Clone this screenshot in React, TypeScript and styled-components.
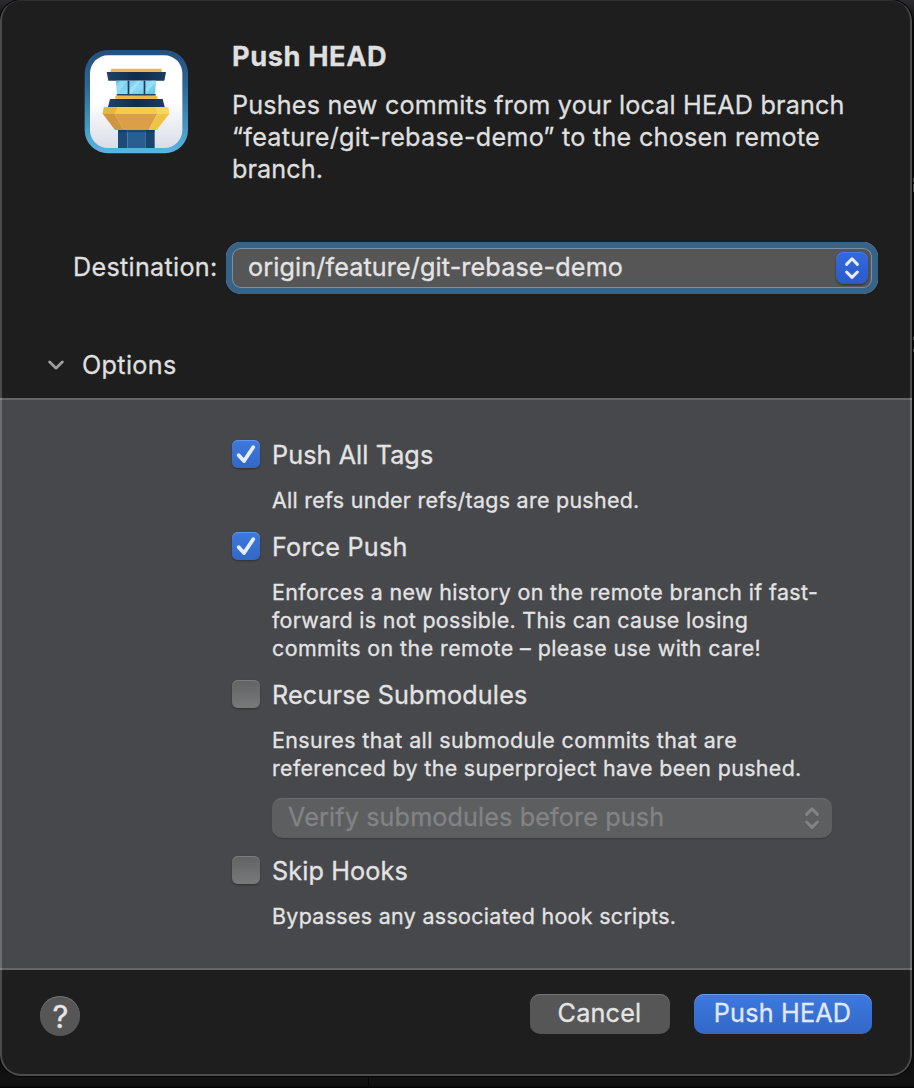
import React, { useState } from 'react';
import styled, { createGlobalStyle, css } from 'styled-components';

const GlobalStyle = createGlobalStyle`
  * { box-sizing: border-box; }
  body {
    margin: 0;
    background: #111111;
    font-family: Inter, "Liberation Sans", sans-serif;
    color: #dfdfdf;
    overflow: hidden;
    -webkit-text-stroke: 0.3px currentColor;
  }
`;

const Desktop = styled.div`
  width: 914px;
  height: 1088px;
  overflow: hidden;
  background: linear-gradient(#4a4a4a, #4a4a4a) 913px 178px / 1px 4px no-repeat,
    linear-gradient(#4a4a4a, #4a4a4a) 913px 184px / 1px 8px no-repeat,
    linear-gradient(#4a4a4a, #4a4a4a) 913px 337px / 1px 3px no-repeat,
    linear-gradient(#4a4a4a, #4a4a4a) 913px 349px / 1px 3px no-repeat,
    linear-gradient(90deg, transparent 368px, #060606 368px, #060606 369px, transparent 369px),
    linear-gradient(#2c2c2e 0, #0b0b0b 24px, #0b0b0b 1040px, #121212 1078px, #0f0f0f 1086px, #040404 1087px);
`;

const Sheet = styled.div`
  position: relative;
  display: flex;
  flex-direction: column;
  width: 912px;
  height: 1076px;
  border-radius: 21px;
  background: #1e1e1e;
  box-shadow: 0 0 0 1px #050505;
  overflow: hidden;

  &::after {
    content: '';
    position: absolute;
    inset: -1px 0 0 0;
    border: 2px solid rgba(255, 255, 255, 0.2);
    border-top-color: rgba(255, 255, 255, 0.08);
    border-radius: 21px;
    pointer-events: none;
  }
`;

const Header = styled.header`
  display: flex;
  gap: 44px;
  height: 242px;
  padding: 40px 0 0 84px;
`;

const AppIcon = styled.svg`
  flex: none;
  width: 104px;
  height: 104px;
  margin-top: 10px;
`;

const Intro = styled.div`
  display: flex;
  flex-direction: column;
`;

const Title = styled.h1`
  margin: 1px 0 16px;
  font-size: 27.2px;
  font-weight: 700;
  line-height: 32px;
  letter-spacing: 0.6px;
`;

const Line = styled.span<{ $track?: number }>`
  display: block;
  white-space: nowrap;
  letter-spacing: ${(p) => p.$track ?? 0}px;
`;

const Body = styled.div`
  font-size: 25.2px;
  line-height: 32px;
`;

const DestinationRow = styled.div`
  display: flex;
  align-items: center;
  height: 52px;
  padding: 0 34px 0 73px;
`;

const FieldLabel = styled.label`
  width: 153px;
  padding-bottom: 2px;
  font-size: 25.2px;
  line-height: 32px;
  letter-spacing: 0.29px;
`;

const PopUp = styled.button<{ $disabled?: boolean }>`
  display: flex;
  align-items: center;
  justify-content: space-between;
  border: 0;
  font: 400 25.2px/32px Inter, "Liberation Sans", sans-serif;
  letter-spacing: 0.12px;
  ${(p) =>
    p.$disabled
      ? css`
          width: 560px;
          height: 40px;
          margin: 16px 0 0 40px;
          padding: 0 4px 0 16px;
          border-radius: 10px;
          background: #5d5e60;
          color: #828385;
          box-shadow: inset 0 1px 0 #6b6c6e, 0 1px 1px rgba(0, 0, 0, 0.2);
        `
      : css`
          flex: 1;
          height: 52px;
          padding: 0 10px 0 22px;
          border-radius: 15px;
          background: #565656;
          color: #e4e4e4;
          box-shadow: inset 0 0 0 6px #386389, inset 0 0 0 7px #7590a8;
        `}
`;

const PopUpText = styled.span`
  padding-bottom: 2px;
`;

const Stepper = styled.span<{ $active?: boolean }>`
  display: flex;
  width: 32px;
  height: 32px;
  border-radius: 8px;
  color: #828385;
  ${(p) =>
    p.$active &&
    css`
      color: #e6edfb;
      background: linear-gradient(#3468dc, #2a5bcb);
      box-shadow: 0 1px 2px rgba(0, 0, 0, 0.5), inset 0 1px 0 #4c7ce2;
    `}
`;

const Disclosure = styled.button`
  display: flex;
  align-items: center;
  height: 104px;
  padding: 38px 0 0 48px;
  border: 0;
  background: none;
  color: #dfdfdf;
  font: 400 25.2px/32px Inter, "Liberation Sans", sans-serif;
  letter-spacing: 0.33px;

  svg {
    margin-right: 18px;
  }
`;

const Options = styled.section`
  display: flex;
  flex-direction: column;
  align-items: flex-start;
  height: 572px;
  padding: 39px 0 0 232px;
  border: solid #666667;
  border-width: 2px 0;
  background: #47484b;
  color: #e3e3e4;
`;

const Option = styled.div`
  margin-bottom: 17px;
`;

const OptionLabel = styled.label`
  display: flex;
  gap: 12px;
  margin-bottom: 15px;
  font-size: 25.2px;
  line-height: 32px;
`;

const Box = styled.span<{ $on: boolean }>`
  width: 28px;
  height: 28px;
  margin-top: 1px;
  border-radius: 6px;
  background: ${(p) => (p.$on ? 'linear-gradient(#3e79de, #3268c6)' : 'linear-gradient(#626365, #78797a)')};
  box-shadow: inset 0 1px 0 ${(p) => (p.$on ? '#6495e4' : '#7b7c7e')}, 0 1px 2px rgba(0, 0, 0, 0.35);

  svg {
    display: block;
  }
`;

const Help = styled.div`
  margin-left: 40px;
  font-size: 21.4px;
  line-height: 28px;
`;

const Footer = styled.footer`
  display: flex;
  align-items: flex-start;
  gap: 24px;
  padding: 24px 40px 0;
`;

const HelpButton = styled.button`
  width: 40px;
  height: 40px;
  margin: 2px auto 0 0;
  padding: 1px 0 0 1px;
  border: 0;
  border-radius: 50%;
  background: #565656;
  box-shadow: inset 0 1px 0 #727272;
  color: #e6e6e6;
  font: 400 31px/39px Inter, "Liberation Sans", sans-serif;
`;

const PushButton = styled.button<{ $primary?: boolean }>`
  width: ${(p) => (p.$primary ? 178 : 140)}px;
  height: 40px;
  padding: 0 1px 2px 0;
  border: 0;
  border-radius: 10px;
  background: ${(p) => (p.$primary ? 'linear-gradient(#3d79e1, #3268c6)' : '#565656')};
  box-shadow: inset 0 1px 0 ${(p) => (p.$primary ? '#6d9ae8' : '#727272')};
  color: ${(p) => (p.$primary ? '#e0e9fa' : '#e4e4e4')};
  font: 400 25.2px/32px Inter, "Liberation Sans", sans-serif;
  letter-spacing: 0.2px;
`;

const Chevrons = () => (
  <svg width="32" height="32" viewBox="0 0 32 32" fill="none" stroke="currentColor" strokeWidth="3" strokeLinecap="round" strokeLinejoin="round">
    <path d="M10.6 12.4 16 6.8l5.4 5.6M10.6 20 16 25.4 21.4 20" />
  </svg>
);

const TowerIcon = () => (
  <AppIcon viewBox="42 42 312 312">
    <defs>
      <linearGradient id="frame" x1="0" y1="0" x2="0" y2="1">
        <stop offset="0" stopColor="#24507c" />
        <stop offset="0.35" stopColor="#2c6796" />
        <stop offset="1" stopColor="#56b8e2" />
      </linearGradient>
      <linearGradient id="plate" x1="0" y1="0" x2="0" y2="1">
        <stop offset="0.5" stopColor="#ffffff" />
        <stop offset="1" stopColor="#d9dde6" />
      </linearGradient>
      <linearGradient id="navy" x1="0" y1="0" x2="1" y2="0">
        <stop offset="0" stopColor="#1f4268" />
        <stop offset="0.5" stopColor="#112c4b" />
        <stop offset="1" stopColor="#1b3c60" />
      </linearGradient>
      <linearGradient id="glass" x1="0" y1="0" x2="1" y2="1">
        <stop offset="0" stopColor="#62c6ea" />
        <stop offset="0.5" stopColor="#8cdaf3" />
        <stop offset="1" stopColor="#5cc2e8" />
      </linearGradient>
    </defs>
    <rect x="44" y="42" width="310" height="310" rx="70" fill="url(#frame)" />
    <rect x="60" y="58" width="277" height="278" rx="54" fill="url(#plate)" />
    <path d="M144 280h28v56h-28z" fill="#1d4a78" />
    <path d="M172 280h54v56h-54z" fill="#275f93" />
    <path d="M226 280h28v56h-28z" fill="#1b456f" />
    <path d="M144 280h110v9H144z" fill="#123256" opacity=".5" />
    <path d="M124 98h150l2 10H121z" fill="#e6bc45" />
    <path d="M110 108h178l-5 26H115z" fill="url(#navy)" />
    <path d="M138 134h120l-3 44H141z" fill="url(#glass)" />
    <path d="M150 134h22l-28 36-3-22zM200 134h14l-34 44h-3v-14zM246 134h11l-31 42-3-12z" fill="#b5e8f7" opacity=".5" />
    <path d="M173 134h5v44h-5zM221 134h5v44h-5z" fill="#173a5c" />
    <path d="M140 174h117v5H140z" fill="#23486b" />
    <path d="M136 179h126v10H136z" fill="#e6bc45" />
    <path d="M120 189h158l6 24H114z" fill="url(#navy)" />
    <path d="M102 213h192l4 20H98z" fill="#f4cb4a" />
    <path d="M98 233 102 213h40l-8 20z" fill="#e9b441" />
    <path d="M98 233h36l28 49h-27z" fill="#d0953f" />
    <path d="M134 233h128l-26 49h-74z" fill="#dba047" />
    <path d="M262 233h36l-38 49h-24z" fill="#f0c443" />
    <path d="M256 213h38l4 20h-36z" fill="#f8d75c" />
  </AppIcon>
);

interface OptionRowProps {
  label: string;
  track: number;
  initial?: boolean;
  lines: [string, number][];
  children?: React.ReactNode;
}

function OptionRow({ label, track, initial = false, lines, children }: OptionRowProps) {
  const [on, setOn] = useState(initial);
  return (
    <Option>
      <OptionLabel onClick={() => setOn(!on)}>
        <Box $on={on}>
          {on && (
            <svg width="28" height="28" viewBox="0 0 28 28" fill="none" stroke="#e6eefc" strokeWidth="3.8" strokeLinecap="round" strokeLinejoin="round">
              <path d="M6.7 15.2 12 21 21.2 7.2" />
            </svg>
          )}
        </Box>
        <Line $track={track}>{label}</Line>
      </OptionLabel>
      <Help>
        {lines.map(([text, t]) => (
          <Line key={text} $track={t}>{text}</Line>
        ))}
      </Help>
      {children}
    </Option>
  );
}

export default function App() {
  return (
    <Desktop>
      <GlobalStyle />
      <Sheet>
        <Header>
          <TowerIcon />
          <Intro>
            <Title>Push HEAD</Title>
            <Body>
              <Line $track={0.17}>Pushes new commits from your local HEAD branch</Line>
              <Line $track={0.25}>“feature/git-rebase-demo” to the chosen remote</Line>
              <Line $track={0.08}>branch.</Line>
            </Body>
          </Intro>
        </Header>
        <DestinationRow>
          <FieldLabel>Destination:</FieldLabel>
          <PopUp>
            <PopUpText>origin/feature/git-rebase-demo</PopUpText>
            <Stepper $active><Chevrons /></Stepper>
          </PopUp>
        </DestinationRow>
        <Disclosure>
          <svg width="16" height="16" viewBox="0 0 16 16" fill="none" stroke="#9f9f9f" strokeWidth="2.6" strokeLinecap="round" strokeLinejoin="round">
            <path d="M1.5 4.8 8 11.2 14.5 4.8" />
          </svg>
          Options
        </Disclosure>
        <Options>
          <OptionRow initial label="Push All Tags" track={0.08} lines={[['All refs under refs/tags are pushed.', 0.3]]} />
          <OptionRow
            initial
            label="Force Push"
            track={0.22}
            lines={[
              ['Enforces a new history on the remote branch if fast-', 0.38],
              ['forward is not possible. This can cause losing', 0.32],
              ['commits on the remote – please use with care!', 0.44],
            ]}
          />
          <OptionRow
            label="Recurse Submodules"
            track={0.17}
            lines={[
              ['Ensures that all submodule commits that are', 0.43],
              ['referenced by the superproject have been pushed.', 0.36],
            ]}
          >
            <PopUp $disabled>
              <PopUpText>Verify submodules before push</PopUpText>
              <Stepper><Chevrons /></Stepper>
            </PopUp>
          </OptionRow>
          <OptionRow label="Skip Hooks" track={0.13} lines={[['Bypasses any associated hook scripts.', 0.34]]} />
        </Options>
        <Footer>
          <HelpButton>?</HelpButton>
          <PushButton>Cancel</PushButton>
          <PushButton $primary>Push HEAD</PushButton>
        </Footer>
      </Sheet>
    </Desktop>
  );
}
